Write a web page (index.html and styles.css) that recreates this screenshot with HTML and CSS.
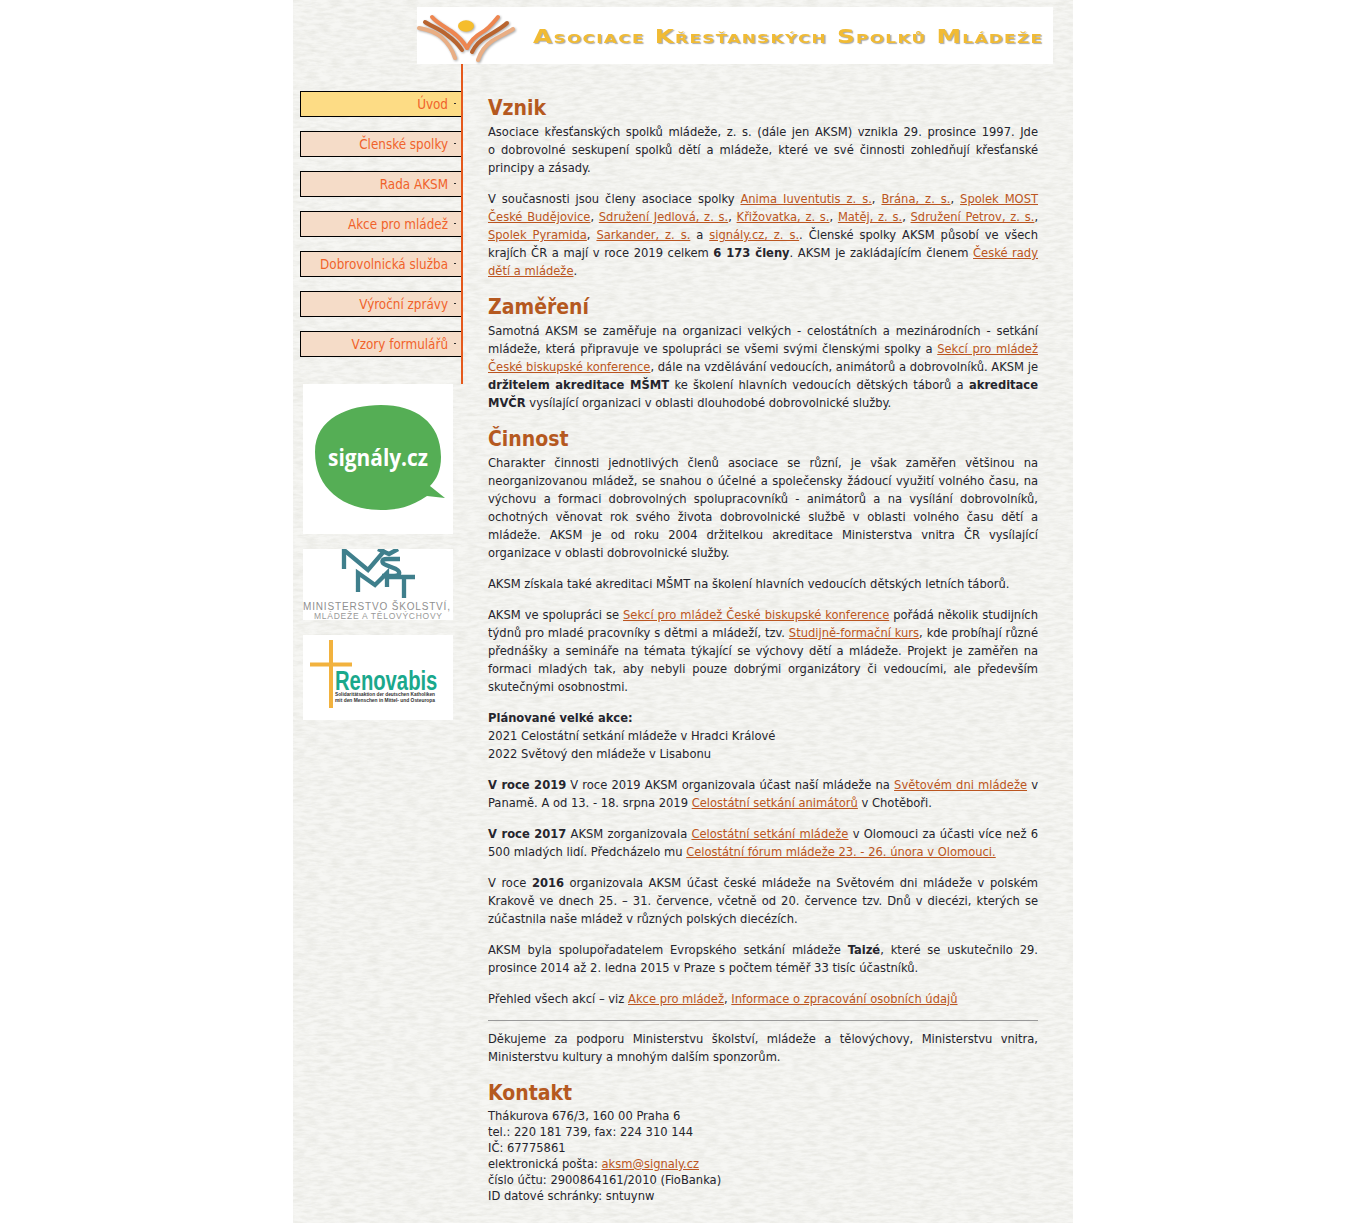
FILE: index.html
```html
<!DOCTYPE html>
<html lang="cs">
<head>
    <meta charset="utf-8">
    <title>Asociace křesťanských spolků mládeže</title>
    <link rel="stylesheet" href="styles.css">
</head>
<body>
    <div class="page">
        <div class="header">
            <div class="banner">
                <svg class="banner-logo" width="104" height="57" viewBox="0 0 104 57">
                    <g fill="none" stroke-linecap="round" stroke-width="4">
                        <path d="M2 21 C8 22 18 25 24 30 C31 36 35 42 38 51" stroke="#e9ae84"/>
                        <path d="M8 15 C14 19 23 22 30 28 C37 33 41 37 45 43" stroke="#b9642f"/>
                        <path d="M15 10 C19 15 28 20 34 24 C41 29 46 34 50 41" stroke="#ee8650"/>
                        <path d="M96 22 C90 26 81 30 75 34 C69 38 64 44 61 53" stroke="#e9ae84"/>
                        <path d="M90 16 C85 21 75 26 69 30 C62 34 58 39 55 45" stroke="#b9642f"/>
                        <path d="M81 10 C77 15 70 23 64 26 C57 30 53 35 50 41" stroke="#ee8650"/>
                    </g>
                    <ellipse cx="49" cy="19" rx="8" ry="5.7" fill="#f5bd2c"/>
                </svg>
                <div class="banner-title">Asociace Křesťanských Spolků Mládeže</div>
            </div>
        </div>

        <div class="columns">
            <div class="sidebar">
                <ul class="menu">
                    <li class="menu-item active"><a href="#">Úvod</a></li>
                    <li class="menu-item"><a href="#">Členské spolky</a></li>
                    <li class="menu-item"><a href="#">Rada AKSM</a></li>
                    <li class="menu-item"><a href="#">Akce pro mládež</a></li>
                    <li class="menu-item"><a href="#">Dobrovolnická služba</a></li>
                    <li class="menu-item"><a href="#">Výroční zprávy</a></li>
                    <li class="menu-item"><a href="#">Vzory formulářů</a></li>
                </ul>

                <div class="partner signaly">
                    <svg width="150" height="150" viewBox="0 0 150 150">
                        <path d="M12 68 C12 34 46 21 78 21 C112 21 138 38 138 73 C138 86 134 95 127 102 L142 114 L124 112 C108 123 94 126 78 126 C40 126 12 104 12 68 Z" fill="#55ae55"/>
                        <text x="25" y="82" textLength="100" lengthAdjust="spacingAndGlyphs" class="signaly-text">signály.cz</text>
                    </svg>
                </div>

                <div class="partner msmt">
                    <svg width="150" height="71" viewBox="0 0 150 71">
                        <g fill="none" stroke="#3f7f8c" stroke-width="4.3">
                            <path d="M41 20 V1 L65 21 L82 1"/>
                            <path d="M75 0 L86 5 L95 0"/>
                            <path d="M97 10 H84 C78 10 78 14 83 16 L93 20 C98 23 97 27 91 27 H79"/>
                            <path d="M55 43 V24 L72 36 L84 24 V38"/>
                            <path d="M84 28 H112 M101 28 V49"/>
                        </g>
                        <text x="0" y="61" textLength="147" class="msmt-line1">MINISTERSTVO ŠKOLSTVÍ,</text>
                        <text x="11" y="70" textLength="128" class="msmt-line2">MLÁDEŽE A TĚLOVÝCHOVY</text>
                    </svg>
                </div>

                <div class="partner renovabis">
                    <svg width="150" height="85" viewBox="0 0 150 85">
                        <path d="M7 29.500 H49 M28 5 V73" fill="none" stroke="#f2b23e" stroke-width="4"/>
                        <text transform="translate(32 55) scale(.75 1)" class="renovabis-name">Renovabis</text>
                        <text x="32" y="61" textLength="100" lengthAdjust="spacingAndGlyphs" class="renovabis-small">Solidaritätsaktion der deutschen Katholiken</text>
                        <text x="32" y="67" textLength="100" lengthAdjust="spacingAndGlyphs" class="renovabis-small">mit den Menschen in Mittel- und Osteuropa</text>
                    </svg>
                </div>
            </div>

            <div class="content">
                <h2>Vznik</h2>
                <p>Asociace křesťanských spolků mládeže, z. s. (dále jen AKSM) vznikla 29. prosince 1997. Jde o&nbsp;dobrovolné seskupení spolků dětí a mládeže, které ve své činnosti zohledňují křesťanské principy a zásady.</p>
                <p>V současnosti jsou členy asociace spolky <a href="#">Anima Iuventutis z. s.</a>, <a href="#">Brána, z. s.</a>, <a href="#">Spolek MOST České Budějovice</a>, <a href="#">Sdružení Jedlová, z. s.</a>, <a href="#">Křižovatka, z. s.</a>, <a href="#">Matěj, z. s.</a>, <a href="#">Sdružení Petrov, z. s.</a>, <a href="#">Spolek Pyramida</a>, <a href="#">Sarkander, z. s.</a> a <a href="#">signály.cz, z. s.</a>. Členské spolky AKSM působí ve všech krajích ČR a mají v roce 2019 celkem <b>6 173 členy</b>. AKSM je zakládajícím členem <a href="#">České rady dětí a mládeže</a>.</p>

                <h2>Zaměření</h2>
                <p>Samotná AKSM se zaměřuje na organizaci velkých - celostátních a mezinárodních - setkání mládeže, která připravuje ve spolupráci se všemi svými členskými spolky a <a href="#">Sekcí pro mládež České biskupské konference</a>, dále na vzdělávání vedoucích, animátorů a dobrovolníků. AKSM je <b>držitelem akreditace MŠMT</b> ke školení hlavních vedoucích dětských táborů a <b>akreditace MVČR</b> vysílající organizaci v oblasti dlouhodobé dobrovolnické služby.</p>

                <h2>Činnost</h2>
                <p>Charakter činnosti jednotlivých členů asociace se různí, je však zaměřen většinou na neorganizovanou mládež, se snahou o účelné a společensky žádoucí využití volného času, na výchovu a formaci dobrovolných spolupracovníků - animátorů a na vysílání dobrovolníků, ochotných věnovat rok svého života dobrovolnické službě v oblasti volného času dětí a mládeže. AKSM je od roku 2004 držitelkou akreditace Ministerstva vnitra ČR vysílající organizace v oblasti dobrovolnické služby.</p>
                <p>AKSM získala také akreditaci MŠMT na školení hlavních vedoucích dětských letních táborů.</p>
                <p>AKSM ve spolupráci se <a href="#">Sekcí pro mládež České biskupské konference</a> pořádá několik studijních týdnů pro mladé pracovníky s dětmi a mládeží, tzv. <a href="#">Studijně-formační kurs</a>, kde probíhají různé přednášky a semináře na témata týkající se výchovy dětí a mládeže. Projekt je zaměřen na formaci mladých tak, aby nebyli pouze dobrými organizátory či vedoucími, ale především skutečnými osobnostmi.</p>
                <p><b>Plánované velké akce:</b><br>2021 Celostátní setkání mládeže v Hradci Králové<br>2022 Světový den mládeže v Lisabonu</p>
                <p><b>V roce 2019</b> V roce 2019 AKSM organizovala účast naší mládeže na <a href="#">Světovém dni mládeže</a> v Panamě. A od 13. - 18. srpna 2019 <a href="#">Celostátní setkání animátorů</a> v Chotěboři.</p>
                <p><b>V roce 2017</b> AKSM zorganizovala <a href="#">Celostátní setkání mládeže</a> v Olomouci za účasti více než 6 500 mladých lidí. Předcházelo mu <a href="#">Celostátní fórum mládeže 23. - 26. února v Olomouci.</a></p>
                <p>V roce <b>2016</b> organizovala AKSM účast české mládeže na Světovém dni mládeže v polském Krakově ve dnech 25. – 31. července, včetně od 20. července tzv. Dnů v diecézi, kterých se zúčastnila naše mládež v různých polských diecézích.</p>
                <p>AKSM byla spolupořadatelem Evropského setkání mládeže <b>Taizé</b>, které se uskutečnilo 29. prosince 2014 až 2. ledna 2015 v Praze s počtem téměř 33 tisíc účastníků.</p>
                <p class="before-rule">Přehled všech akcí – viz <a href="#">Akce pro mládež</a>, <a href="#">Informace o zpracování osobních údajů</a></p>
                <hr>
                <p>Děkujeme za podporu Ministerstvu školství, mládeže a tělovýchovy, Ministerstvu vnitra, Ministerstvu kultury a mnohým dalším sponzorům.</p>

                <h2>Kontakt</h2>
                <p class="contact">Thákurova 676/3, 160 00 Praha 6<br>tel.: 220 181 739, fax: 224 310 144<br>IČ: 67775861<br>elektronická pošta: <a href="#">aksm@signaly.cz</a><br>číslo účtu: 2900864161/2010 (FioBanka)<br>ID datové schránky: sntuynw</p>
            </div>
        </div>
    </div>
</body>
</html>
```

FILE: styles.css
```css
body {
    margin: 0;
    background-color: #fff;
    font-family: "DejaVu Sans Condensed", "DejaVu Sans", sans-serif;
    font-size: 12.8px;
    line-height: 18px;
    color: #25252d;
}

.page {
    width: 780px;
    height: 1223px;
    margin: 0 auto;
    overflow: hidden;
    background-color: #f6f6f3;
    background-image: url("data:image/svg+xml,%3Csvg xmlns='http://www.w3.org/2000/svg' width='400' height='400'%3E%3Cfilter id='p' x='0' y='0' width='100%25' height='100%25'%3E%3CfeTurbulence type='fractalNoise' baseFrequency='0.08 0.3' numOctaves='3' seed='4' stitchTiles='stitch'/%3E%3CfeColorMatrix values='0 0 0 0 0.6 0 0 0 0 0.6 0 0 0 0 0.54 0.6 0 0 0 -0.2'/%3E%3C/filter%3E%3Crect width='400' height='400' filter='url(%23p)'/%3E%3C/svg%3E");
}

.header {
    display: flex;
    justify-content: flex-end;
    padding: 7px 20px 0 0;
}

.banner {
    display: flex;
    align-items: center;
    width: 636px;
    height: 57px;
    background-color: #fff;
}

.banner-logo {
    flex: none;
    filter: drop-shadow(1px 1px 1px #aaa);
}

.banner-title {
    margin-left: 12px;
    font-family: "DejaVu Sans", sans-serif;
    font-size: 19px;
    font-weight: bold;
    font-variant: small-caps;
    letter-spacing: 1px;
    white-space: nowrap;
    color: #f1bb34;
    text-shadow: 1px 1px 1px #aaa;
    transform: scaleX(1.3);
    transform-origin: left center;
}

.columns {
    display: flex;
}

.sidebar {
    width: 170px;
    flex: none;
}

.menu {
    list-style: none;
    width: 161px;
    height: 293px;
    margin: 0 0 0 7px;
    padding: 27px 0 0;
    border-right: 2px solid #e5591c;
}

.menu-item {
    position: relative;
    height: 26px;
    margin-bottom: 14px;
    padding-right: 13px;
    box-sizing: border-box;
    border: 1px solid #000;
    border-right: 0;
    background-color: #f5dcc8;
    font-size: 13.35px;
    text-align: right;
    line-height: 25px;
}

.menu-item.active {
    background-color: #fddc85;
}

.menu-item a {
    color: #f0622a;
    text-decoration: none;
}

.menu-item::after {
    content: "";
    position: absolute;
    right: 5px;
    top: 11px;
    width: 2px;
    height: 1px;
    background-color: #333;
}

.partner {
    width: 150px;
    margin: 15px 0 0 10px;
    background-color: #fff;
}

.partner svg {
    display: block;
}

.signaly {
    height: 150px;
    margin-top: 0;
}

.msmt {
    height: 71px;
}

.renovabis {
    height: 85px;
}

.signaly-text {
    font-family: "Open Sans", sans-serif;
    font-size: 24px;
    font-weight: bold;
    fill: #fff;
}

.msmt-line1 {
    font-family: "Liberation Sans", sans-serif;
    font-size: 10px;
    fill: #8f8f8f;
}

.msmt-line2 {
    font-family: "Liberation Sans", sans-serif;
    font-size: 8.5px;
    fill: #999;
}

.renovabis-name {
    font-family: "Liberation Sans", sans-serif;
    font-size: 27px;
    font-weight: bold;
    fill: #1aa88c;
}

.renovabis-small {
    font-family: "Liberation Sans", sans-serif;
    font-size: 5px;
    font-weight: bold;
    fill: #333;
}

.content {
    width: 550px;
    margin-left: 25px;
    padding-top: 30px;
    text-align: justify;
}

.content h2 {
    margin: 0;
    font-size: 21px;
    line-height: 29px;
    font-weight: bold;
    color: #b5591f;
}

.content p {
    margin: 0 0 13px;
}

.content p.before-rule {
    margin-bottom: 12px;
}

.content a {
    color: #bb5520;
}

.content hr {
    height: 1px;
    margin: 0 0 9px;
    border: 0;
    background-color: #999;
}

.contact {
    line-height: 16px;
    text-align: left;
}
```
